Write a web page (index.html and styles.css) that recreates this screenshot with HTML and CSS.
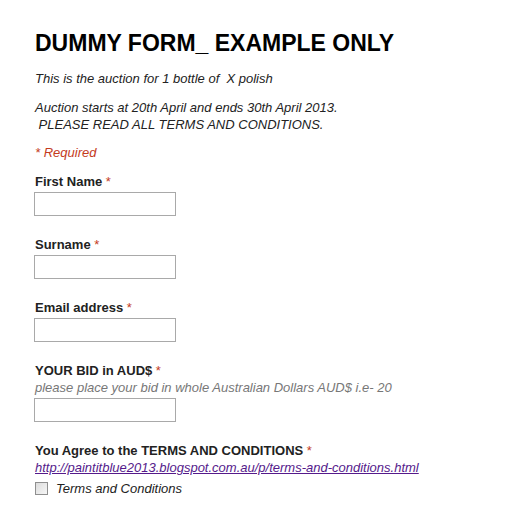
FILE: index.html
```html
<!DOCTYPE html>
<html>
<head>
<meta charset="utf-8">
<link rel="stylesheet" href="styles.css">
</head>
<body>
<div class="form">
  <h1 class="title">DUMMY FORM_ EXAMPLE ONLY</h1>
  <p class="desc desc-first">This is the auction for 1 bottle of&nbsp; X polish</p>
  <p class="desc">Auction starts at 20th April and ends 30th April 2013.<br>&nbsp;PLEASE READ ALL TERMS AND CONDITIONS.</p>
  <p class="required-note">* Required</p>

  <div class="item">
    <label class="label">First Name <span class="req">*</span></label>
    <input class="text-input" type="text">
  </div>
  <div class="item">
    <label class="label">Surname <span class="req">*</span></label>
    <input class="text-input" type="text">
  </div>
  <div class="item">
    <label class="label">Email address <span class="req">*</span></label>
    <input class="text-input" type="text">
  </div>
  <div class="item">
    <label class="label">YOUR BID in AUD$ <span class="req">*</span></label>
    <div class="help">please place your bid in whole Australian Dollars AUD$ i.e- 20</div>
    <input class="text-input" type="text">
  </div>
  <div class="item">
    <label class="label">You Agree to the TERMS AND CONDITIONS <span class="req">*</span></label>
    <a class="link" href="#">http://paintitblue2013.blogspot.com.au/p/terms-and-conditions.html</a>
    <div class="check-row">
      <span class="checkbox"></span>
      <span class="check-label">Terms and Conditions</span>
    </div>
  </div>
</div>
</body>
</html>
```
FILE: styles.css
```css
html, body {
  margin: 0;
  padding: 0;
  background: #fff;
}
body {
  font-family: "Liberation Sans", Arial, sans-serif;
  color: #222;
}
.form {
  padding: 29px 0 0 34px;
  display: flex;
  flex-direction: column;
  align-items: flex-start;
}
.title {
  margin: 0 0 0 1px;
  font-size: 23px;
  line-height: 28px;
  font-weight: bold;
  color: #000;
}
.desc {
  margin: 12px 0 0 1px;
  font-size: 13px;
  line-height: 17px;
  font-style: italic;
  color: #222;
}
.desc-first {
  margin-top: 13px;
}
.required-note {
  margin: 11px 0 0 1px;
  font-size: 13px;
  line-height: 17px;
  font-style: italic;
  color: #c43b1d;
}
.item {
  display: flex;
  flex-direction: column;
  align-items: flex-start;
  margin-top: 12px;
}
.item + .item {
  margin-top: 20px;
}
.label {
  margin-left: 1px;
  font-size: 13px;
  line-height: 17px;
  font-weight: bold;
  color: #222;
}
.req {
  color: #c43b1d;
  font-weight: normal;
}
.help {
  margin-left: 1px;
  font-size: 13px;
  line-height: 17px;
  font-style: italic;
  color: #777;
}
.text-input {
  margin: 2px 0 0 0;
  box-sizing: border-box;
  width: 142px;
  height: 24px;
  border: 1px solid #a9a9a9;
  padding: 0 3px;
  background: #fff;
}
.link {
  margin-left: 1px;
  font-size: 13px;
  line-height: 17px;
  font-style: italic;
  color: #551a8b;
  text-decoration: underline;
}
.check-row {
  display: flex;
  align-items: center;
  gap: 8px;
  margin-top: 4px;
  margin-left: 1px;
  height: 17px;
}
.checkbox {
  box-sizing: border-box;
  width: 13px;
  height: 13px;
  border: 1px solid #8f8f8f;
  background: linear-gradient(135deg, #dcdcdc, #f6f6f6);
}
.check-label {
  font-size: 13px;
  font-style: italic;
  color: #222;
}
```
